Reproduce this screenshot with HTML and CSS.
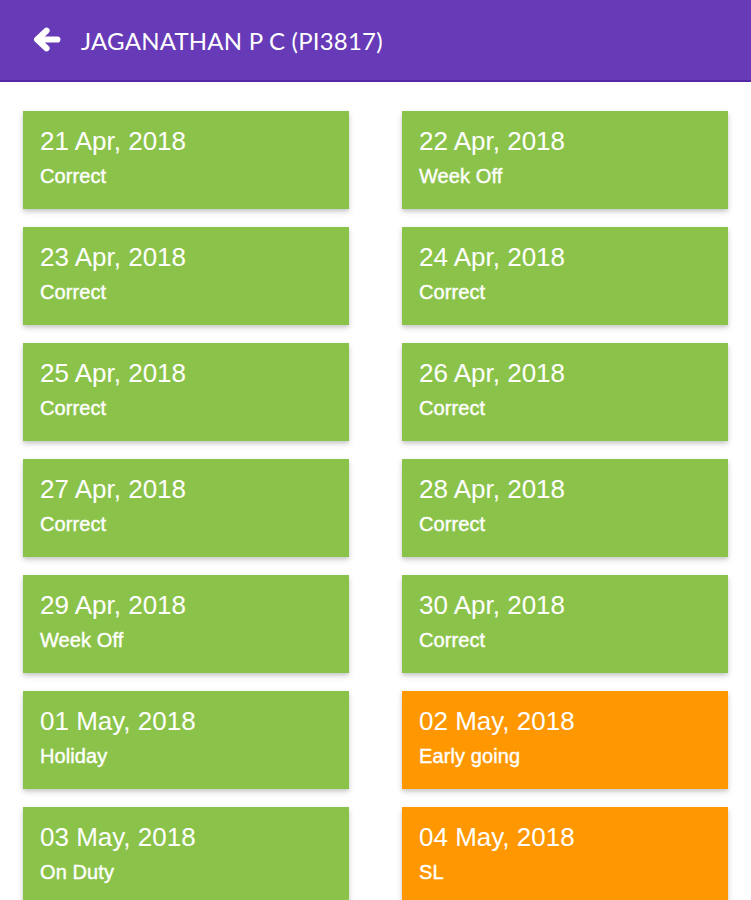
FILE: index.html
```html
<!DOCTYPE html>
<html>
<head>
<meta charset="utf-8">
<link rel="stylesheet" href="styles.css">
</head>
<body>
<header class="topbar">
  <svg class="back" viewBox="0 0 28 26" width="29" height="27"><path d="M24.5 13H6M14 4.5L5 13l9 8.5" fill="none" stroke="#fff" stroke-width="6" stroke-linecap="round" stroke-linejoin="round"/></svg>
  <h1 class="title">JAGANATHAN P C (PI3817)</h1>
</header>
<main class="grid">
  <div class="card green"><div class="date">21 Apr, 2018</div><div class="status">Correct</div></div>
  <div class="card green"><div class="date">22 Apr, 2018</div><div class="status">Week Off</div></div>
  <div class="card green"><div class="date">23 Apr, 2018</div><div class="status">Correct</div></div>
  <div class="card green"><div class="date">24 Apr, 2018</div><div class="status">Correct</div></div>
  <div class="card green"><div class="date">25 Apr, 2018</div><div class="status">Correct</div></div>
  <div class="card green"><div class="date">26 Apr, 2018</div><div class="status">Correct</div></div>
  <div class="card green"><div class="date">27 Apr, 2018</div><div class="status">Correct</div></div>
  <div class="card green"><div class="date">28 Apr, 2018</div><div class="status">Correct</div></div>
  <div class="card green"><div class="date">29 Apr, 2018</div><div class="status">Week Off</div></div>
  <div class="card green"><div class="date">30 Apr, 2018</div><div class="status">Correct</div></div>
  <div class="card green"><div class="date">01 May, 2018</div><div class="status">Holiday</div></div>
  <div class="card orange"><div class="date">02 May, 2018</div><div class="status">Early going</div></div>
  <div class="card green"><div class="date">03 May, 2018</div><div class="status">On Duty</div></div>
  <div class="card orange"><div class="date">04 May, 2018</div><div class="status">SL</div></div>
</main>
</body>
</html>
```
FILE: styles.css
```css
html, body {
  margin: 0;
  padding: 0;
  background: #fff;
}
body {
  font-family: "Liberation Sans", Arial, sans-serif;
  overflow: hidden;
  height: 900px;
}
.topbar {
  height: 80px;
  background: #673ab7;
  border-bottom: 2px solid #5527a3;
  display: flex;
  align-items: center;
  padding-left: 32px;
  box-sizing: content-box;
}
.back {
  display: block;
  margin-top: -1px;
}
.title {
  margin: 0 0 0 20px;
  color: #fff;
  font-family: Lato, "Open Sans", sans-serif;
  font-weight: 400;
  font-size: 24px;
  letter-spacing: 0.2px;
}
.grid {
  display: grid;
  grid-template-columns: 326px 326px;
  column-gap: 53px;
  row-gap: 18px;
  padding: 29px 23px 0 23px;
}
.card {
  height: 98px;
  box-sizing: border-box;
  padding: 15px 17px 0 17px;
  color: #fff;
  box-shadow: 0 3px 6px rgba(0,0,0,0.16), 0 2px 3px rgba(0,0,0,0.08);
}
.green { background: #8bc34a; }
.orange { background: #ff9800; }
.date {
  font-size: 26px;
  line-height: 30px;
}
.status {
  font-size: 20px;
  line-height: 28px;
  margin-top: 6px;
  letter-spacing: 0.1px;
  -webkit-text-stroke: 0.4px #fff;
}
```
